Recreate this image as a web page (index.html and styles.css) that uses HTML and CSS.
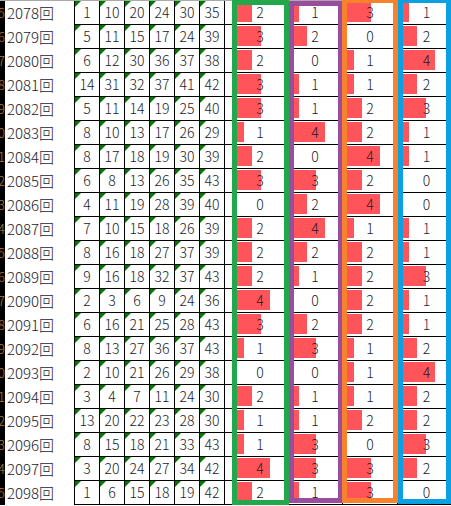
FILE: index.html
```html
<!DOCTYPE html>
<html lang="ja">

<head>
  <meta charset="UTF-8">
  <title>sheet</title>
  <link rel="stylesheet" href="styles.css">
</head>

<body>
  <div class="sheet">
    <div class="rows" id="rows"></div>

    <div class="frame frame-green"></div>
    <div class="frame frame-purple"></div>
    <div class="frame frame-orange"></div>
    <div class="frame frame-blue"></div>
  </div>

  <script>
    var data = [
      [2078, [1, 10, 20, 24, 30, 35], [2, 1, 3, 1]],
      [2079, [5, 11, 15, 17, 24, 39], [3, 2, 0, 2]],
      [2080, [6, 12, 30, 36, 37, 38], [2, 0, 1, 4]],
      [2081, [14, 31, 32, 37, 41, 42], [3, 1, 1, 2]],
      [2082, [5, 11, 14, 19, 25, 40], [3, 1, 2, 3]],
      [2083, [8, 10, 13, 17, 26, 29], [1, 4, 2, 1]],
      [2084, [8, 17, 18, 19, 30, 39], [2, 0, 4, 1]],
      [2085, [6, 8, 13, 26, 35, 43], [3, 3, 2, 0]],
      [2086, [4, 11, 19, 28, 39, 40], [0, 2, 4, 0]],
      [2087, [7, 10, 15, 18, 26, 39], [2, 4, 1, 1]],
      [2088, [8, 16, 18, 27, 37, 39], [2, 2, 2, 1]],
      [2089, [9, 16, 18, 32, 37, 43], [2, 1, 2, 3]],
      [2090, [2, 3, 6, 9, 24, 36], [4, 0, 2, 1]],
      [2091, [6, 16, 21, 25, 28, 43], [3, 2, 2, 1]],
      [2092, [8, 13, 27, 36, 37, 43], [1, 3, 1, 2]],
      [2093, [2, 10, 21, 26, 29, 38], [0, 0, 1, 4]],
      [2094, [3, 4, 7, 11, 24, 30], [2, 1, 1, 2]],
      [2095, [13, 20, 22, 23, 28, 30], [1, 1, 2, 2]],
      [2096, [8, 15, 18, 21, 33, 43], [1, 3, 0, 3]],
      [2097, [3, 20, 24, 27, 34, 42], [4, 3, 3, 2]],
      [2098, [1, 6, 15, 18, 19, 42], [2, 1, 3, 0]]
    ];

    var rows = document.getElementById("rows");

    data.forEach(function (d, i) {
      var html = '<div class="head"><span>' + (85 + i) + '</span></div>';
      html += '<div class="label">' + d[0] + '回</div>';
      d[1].forEach(function (n) {
        html += '<div class="num">' + n + '</div>';
      });
      html += '<div class="gap"></div>';
      d[2].forEach(function (v) {
        html += '<div class="val"><i class="bar" style="width:' + (v * 8.7) + 'px"></i><span>' + v + '</span></div>';
      });

      var row = document.createElement("div");
      row.className = "row";
      row.innerHTML = html;
      rows.appendChild(row);
    });
  </script>
</body>

</html>
```

FILE: styles.css
```css
html,
body {
  margin: 0;
  background: #FFF;
}

body {
  overflow: hidden;
  font-family: "Noto Sans CJK JP", "DejaVu Sans", sans-serif;
  font-size: 14px;
  font-weight: 300;
  color: #1b1b28;
}

.sheet {
  position: relative;
  width: 451px;
  height: 506px;
  overflow: hidden;
}

.rows {
  width: 460px;
  border-top: 1px solid #a9a9a9;
}

.row {
  display: flex;
  height: 24px;
}

.row > div {
  flex: none;
  box-sizing: border-box;
}

.head {
  width: 5px;
  background: #000;
  color: #b07a3c;
  font-size: 13px;
  line-height: 24px;
  overflow: hidden;
  display: flex;
  justify-content: flex-end;
}

.label {
  width: 69px;
  padding-left: 2px;
  font-size: 15px;
  line-height: 23px;
}

.num {
  position: relative;
  width: 25px;
  border-left: 1px solid #000;
  border-bottom: 1px solid #000;
  text-align: center;
  line-height: 23px;
}

.num::before {
  content: "";
  position: absolute;
  left: 0;
  top: 0;
  border-top: 6px solid #007800;
  border-right: 6px solid transparent;
}

.gap {
  width: 8px;
  border-left: 1px solid #000;
  border-bottom: 1px solid #000;
}

.val {
  width: 55px;
  border-left: 1px solid #000;
  border-bottom: 1px solid #000;
  display: grid;
}

.val:last-child {
  width: 58px;
}

.bar {
  grid-area: 1 / 1;
  justify-self: start;
  align-self: start;
  margin: 1px 0 0 2px;
  height: 20px;
  background: #ff555a;
}

.val span {
  grid-area: 1 / 1;
  justify-self: center;
  line-height: 23px;
}

.frame {
  position: absolute;
  box-sizing: border-box;
  border: 5px solid;
}

.frame-green {
  left: 232px;
  top: 0;
  width: 57px;
  height: 505px;
  border-color: #22a84a;
}

.frame-purple {
  left: 289px;
  top: 1px;
  width: 54px;
  height: 502px;
  border-color: #9a4c9f;
}

.frame-orange {
  left: 342px;
  top: -2px;
  width: 56px;
  height: 505px;
  border-color: #f8822b;
}

.frame-blue {
  left: 398px;
  top: -2px;
  width: 53px;
  height: 506px;
  border-color: #0ba0e2;
}
```
